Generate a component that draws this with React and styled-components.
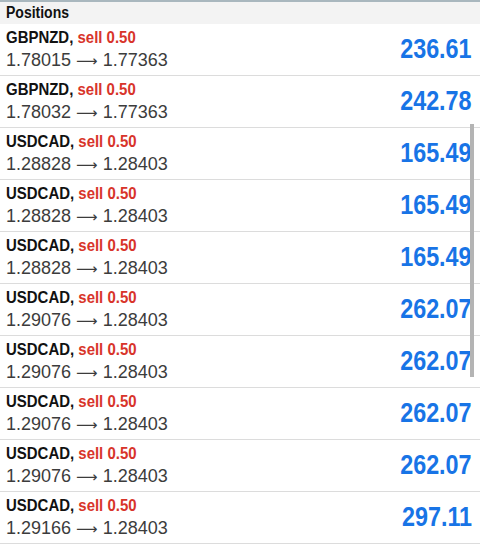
import React from "react";
import styled, { createGlobalStyle } from "styled-components";

const Global = createGlobalStyle`
  html, body { margin: 0; padding: 0; background: #ffffff; }
  body { width: 480px; height: 545px; overflow: hidden; }
`;

const sans = `"Liberation Sans", Arial, sans-serif`;

const Screen = styled.div`
  position: relative;
  width: 480px;
  height: 545px;
  overflow: hidden;
  background: #ffffff;
`;

const Header = styled.div`
  height: 22px;
  border-top: 2px solid #a9b7be;
  background: #f3f3f3;
  padding-left: 6px;
`;

const HeaderText = styled.div`
  font-family: ${sans};
  font-weight: 700;
  font-size: 16px;
  line-height: 22px;
  color: #111;
  transform: scaleX(0.875);
  transform-origin: left center;
`;

const List = styled.div`
  display: flex;
  flex-direction: column;
`;

const Row = styled.div`
  height: 51px;
  border-bottom: 1px solid #dcdcdc;
  display: flex;
  align-items: center;
  justify-content: space-between;
  padding: 0 8px 0 6px;
`;

const Info = styled.div`
  display: flex;
  flex-direction: column;
  align-self: flex-start;
  padding-top: 4px;
`;

const Title = styled.div`
  font-family: ${sans};
  font-weight: 700;
  font-size: 17px;
  line-height: 20px;
  color: #111;
  white-space: nowrap;
  transform: scaleX(0.88);
  transform-origin: left center;
`;

const Side = styled.span`
  color: #d8342a;
`;

const Prices = styled.div`
  font-family: ${sans};
  font-size: 18px;
  line-height: 24px;
  color: #3c3c3c;
  white-space: nowrap;
`;

const Arrow = styled.span`
  font-family: "DejaVu Sans", sans-serif;
  font-size: 15px;
  line-height: 0;
  color: #3c3c3c;
`;

const Profit = styled.div`
  font-family: ${sans};
  font-weight: 700;
  font-size: 27px;
  color: #1874e6;
  transform: scaleX(0.865);
  transform-origin: right center;
`;

const Scrollbar = styled.div`
  position: absolute;
  right: 6px;
  top: 124px;
  width: 4px;
  height: 253px;
  background: #b4b4b4;
`;

const rows = [
  ["GBPNZD", "1.78015", "1.77363", "236.61"],
  ["GBPNZD", "1.78032", "1.77363", "242.78"],
  ["USDCAD", "1.28828", "1.28403", "165.49"],
  ["USDCAD", "1.28828", "1.28403", "165.49"],
  ["USDCAD", "1.28828", "1.28403", "165.49"],
  ["USDCAD", "1.29076", "1.28403", "262.07"],
  ["USDCAD", "1.29076", "1.28403", "262.07"],
  ["USDCAD", "1.29076", "1.28403", "262.07"],
  ["USDCAD", "1.29076", "1.28403", "262.07"],
  ["USDCAD", "1.29166", "1.28403", "297.11"],
];

export default function App() {
  return (
    <Screen>
      <Global />
      <Header>
        <HeaderText>Positions</HeaderText>
      </Header>
      <List>
        {rows.map(([sym, open, cur, profit], i) => (
          <Row key={i}>
            <Info>
              <Title>
                {sym}, <Side>sell 0.50</Side>
              </Title>
              <Prices>
                {open} <Arrow>⟶</Arrow> {cur}
              </Prices>
            </Info>
            <Profit>{profit}</Profit>
          </Row>
        ))}
      </List>
      <Scrollbar />
    </Screen>
  );
}
